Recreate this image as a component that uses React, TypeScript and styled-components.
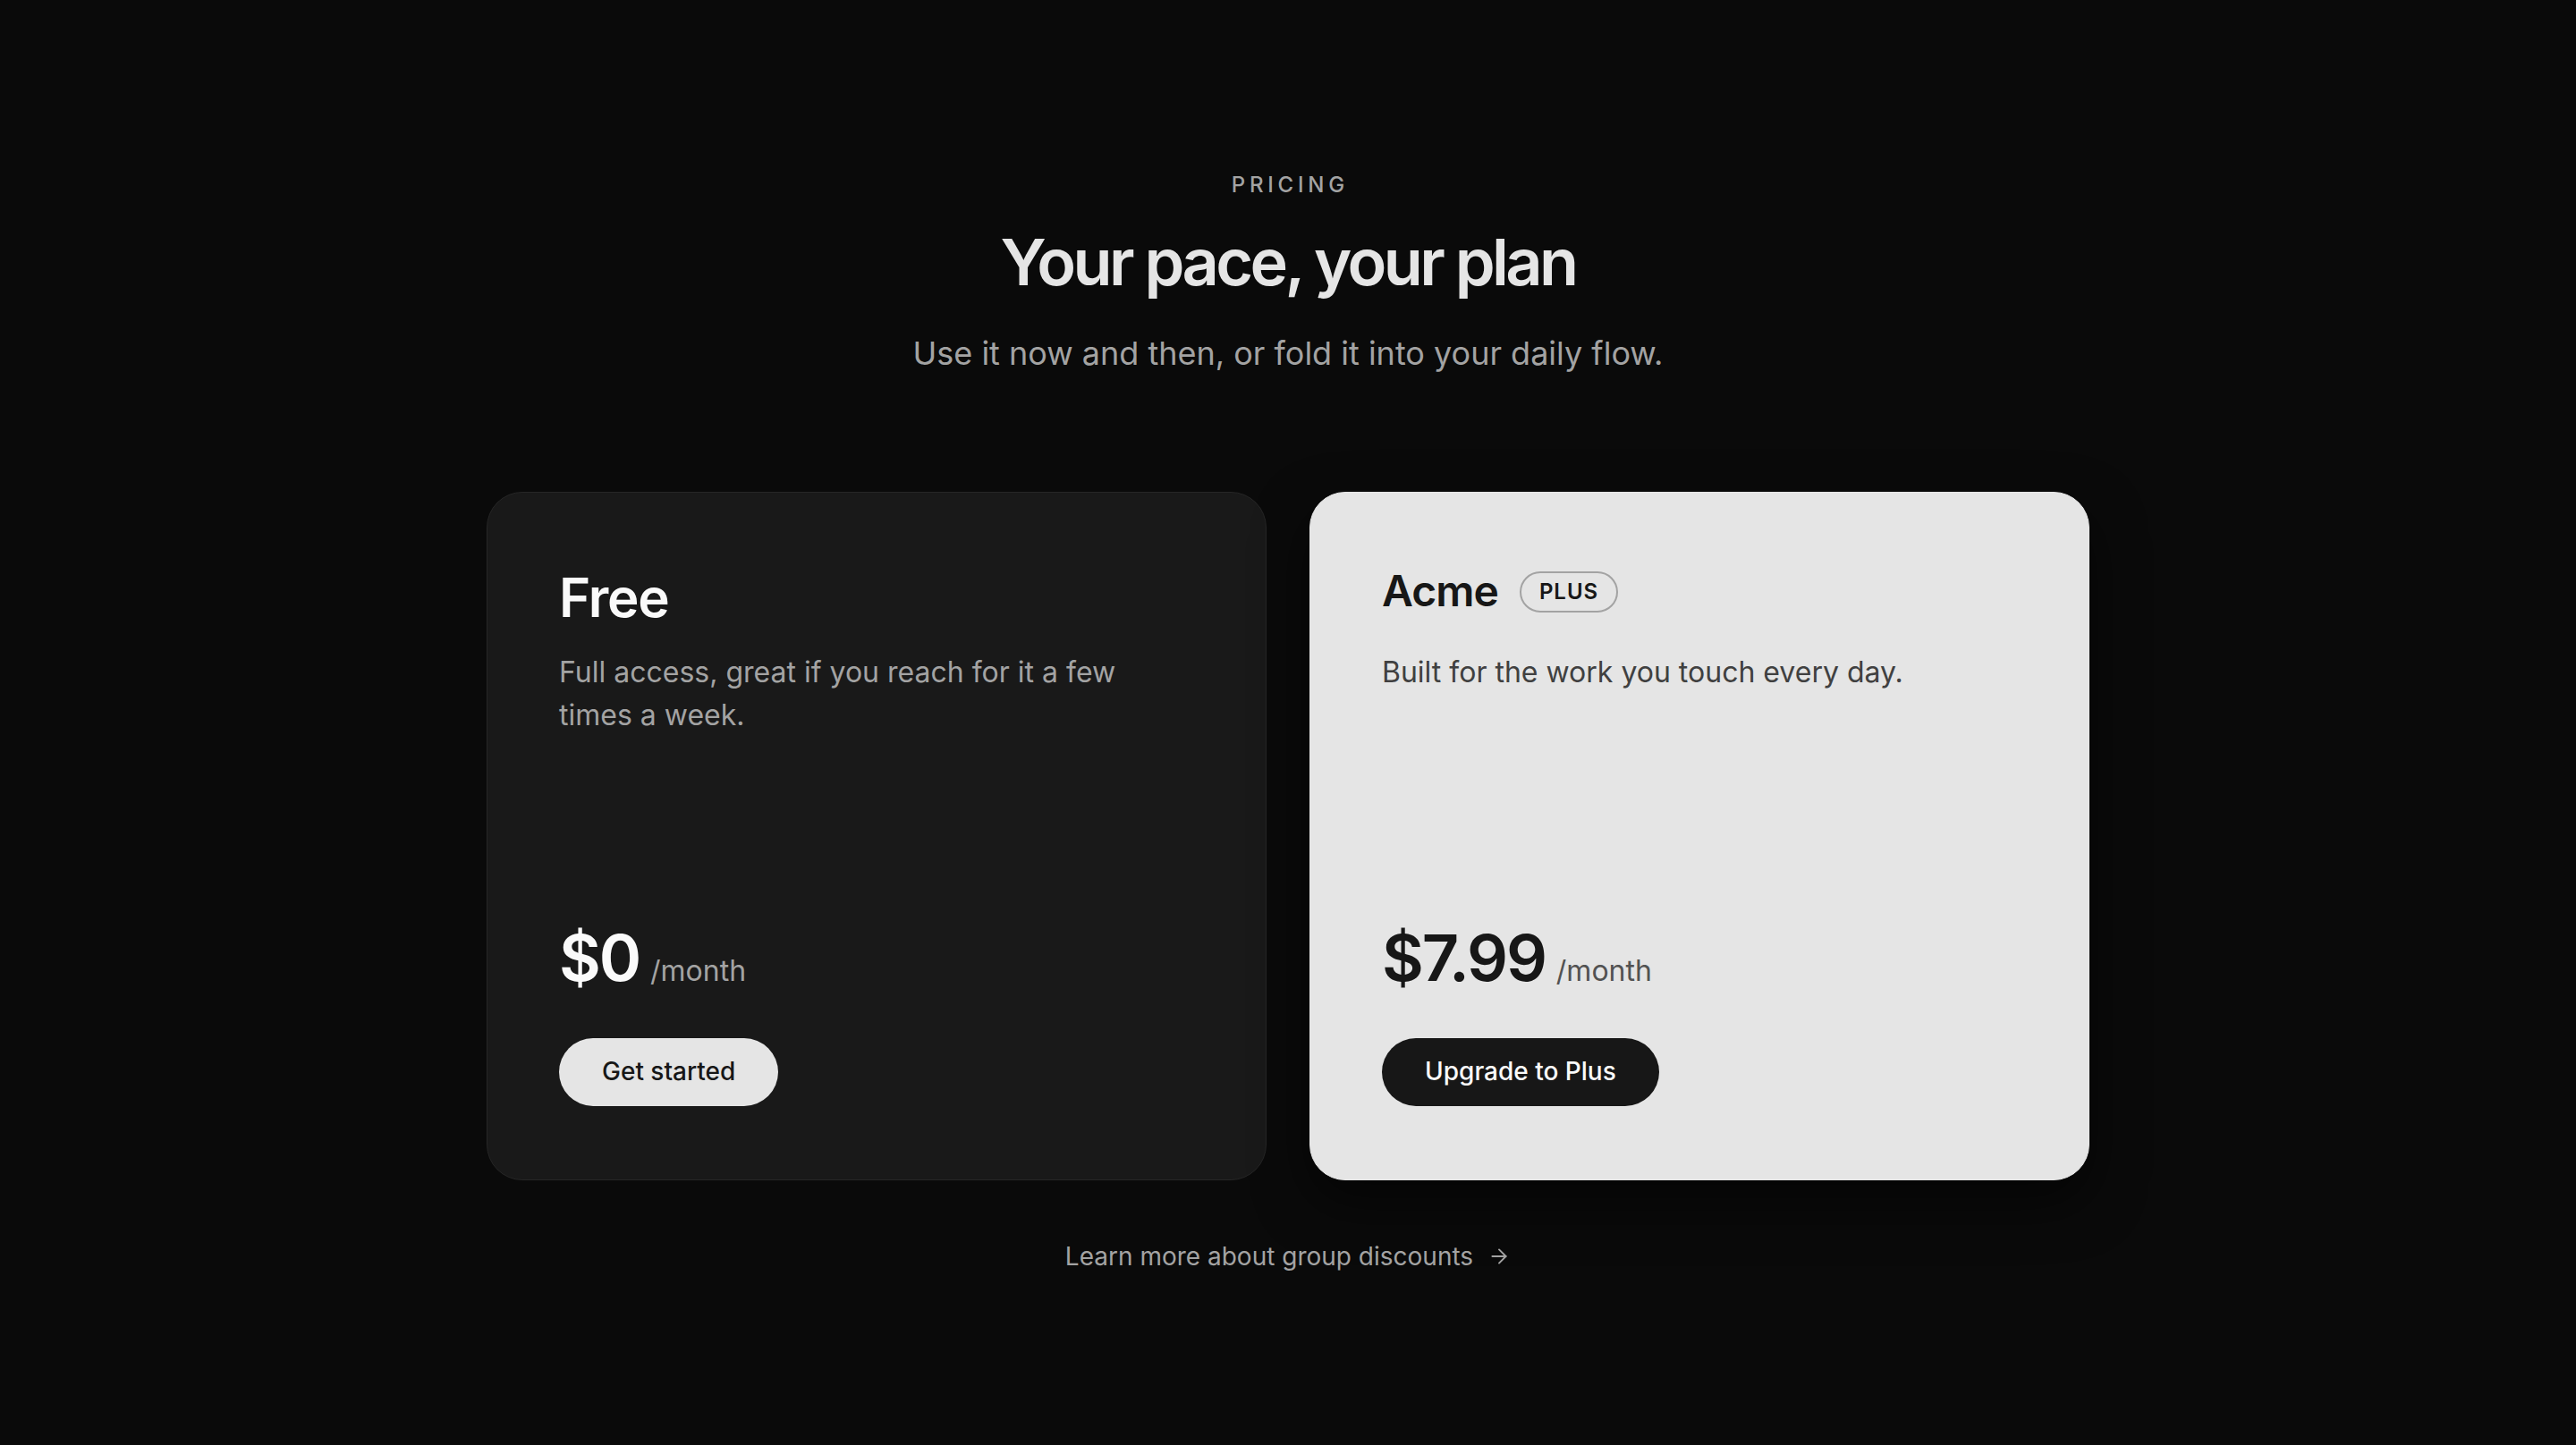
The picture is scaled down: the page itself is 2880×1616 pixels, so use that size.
import styled, { createGlobalStyle } from "styled-components"
import { ArrowRight } from "lucide-react"

const GlobalStyle = createGlobalStyle`
    html, body {
        margin: 0;
        padding: 0;
        background: #0a0a0a;
    }
    body {
        font-family: Inter, "Noto Sans", "Liberation Sans", sans-serif;
        -webkit-font-smoothing: antialiased;
    }
    * { box-sizing: border-box; }
`

type Tone = 'dark' | 'light'

const Page = styled.main({
    minHeight: '100vh',
    display: 'flex',
    flexDirection: 'column',
    alignItems: 'center',
    justifyContent: 'center',
    padding: '44px 0 40px',
})

const Eyebrow = styled.div({
    fontSize: 24,
    lineHeight: '33px',
    fontWeight: 500,
    letterSpacing: '0.2em',
    color: '#a3a3a3',
    textTransform: 'uppercase',
    paddingLeft: '0.2em',
    marginTop: -4,
})

const Title = styled.h1({
    margin: '30px 0 0',
    fontSize: 72,
    lineHeight: 1.1,
    fontWeight: 600,
    letterSpacing: '-0.05em',
    color: '#e5e5e5',
})

const Subtitle = styled.p({
    margin: '35px 0 0',
    fontSize: 36,
    lineHeight: 1.5,
    color: '#a3a3a3',
})

const Plans = styled.div({
    marginTop: 128,
    width: 1792,
    display: 'grid',
    gridTemplateColumns: '1fr 1fr',
    gap: 48,
})

const Card = styled.section((props: { tone: Tone }) => ({
    minHeight: 770,
    display: 'flex',
    flexDirection: 'column',
    alignItems: 'flex-start',
    padding: '81px 80px 82px',
    borderRadius: 40,
    background: props.tone === 'dark' ? '#191919' : '#e5e5e5',
    border: props.tone === 'dark' ? '1px solid #262626' : '1px solid #e5e5e5',
    boxShadow: props.tone === 'light' ? '0 24px 60px rgba(0, 0, 0, 0.55)' : 'none',
}))

const CardHeader = styled.div({
    minHeight: 72,
})

const NameRow = styled.div({
    display: 'flex',
    alignItems: 'center',
    gap: 24,
})

const PlanName = styled.h2((props: { tone: Tone, size: number }) => ({
    margin: 0,
    fontSize: props.size,
    lineHeight: 1.2,
    fontWeight: 600,
    letterSpacing: '-0.02em',
    color: props.tone === 'dark' ? '#fafafa' : '#171717',
}))

const Badge = styled.span({
    display: 'inline-block',
    marginTop: 4,
    padding: '9px 20px',
    border: '2px solid #a3a3a3',
    borderRadius: 999,
    fontSize: 24,
    lineHeight: 1,
    fontWeight: 600,
    letterSpacing: '0.04em',
    textTransform: 'uppercase',
    color: '#171717',
})

const Description = styled.p((props: { tone: Tone }) => ({
    margin: '24px 0 0',
    maxWidth: 660,
    fontSize: 32,
    lineHeight: 1.5,
    color: props.tone === 'dark' ? '#a3a3a3' : '#404040',
}))

const PriceRow = styled.div({
    marginTop: 'auto',
    display: 'flex',
    alignItems: 'baseline',
    gap: 12,
})

const Amount = styled.span((props: { tone: Tone }) => ({
    fontSize: 72,
    lineHeight: 1,
    fontWeight: 600,
    letterSpacing: '-0.03em',
    color: props.tone === 'dark' ? '#fafafa' : '#171717',
}))

const Period = styled.span((props: { tone: Tone }) => ({
    fontSize: 32,
    color: props.tone === 'dark' ? '#a3a3a3' : '#525252',
}))

const Button = styled.button((props: { tone: Tone }) => ({
    marginTop: 54,
    border: 0,
    padding: '18px 48px',
    borderRadius: 999,
    fontFamily: 'inherit',
    fontSize: 28,
    lineHeight: 1.4,
    fontWeight: 500,
    cursor: 'pointer',
    background: props.tone === 'dark' ? '#e5e5e5' : '#171717',
    color: props.tone === 'dark' ? '#171717' : '#fafafa',
}))

const MoreLink = styled.a({
    marginTop: 64,
    display: 'inline-flex',
    alignItems: 'center',
    gap: 16,
    fontSize: 28,
    lineHeight: 1.5,
    color: '#a3a3a3',
    textDecoration: 'none',
})

function App(): JSX.Element {
    return (
        <>
            <GlobalStyle />
            <Page>
                <Eyebrow>Pricing</Eyebrow>
                <Title>Your pace, your plan</Title>
                <Subtitle>Use it now and then, or fold it into your daily flow.</Subtitle>

                <Plans>
                    <Card tone="dark">
                        <CardHeader>
                            <PlanName tone="dark" size={60}>Free</PlanName>
                        </CardHeader>
                        <Description tone="dark">
                            Full access, great if you reach for it a few times a week.
                        </Description>
                        <PriceRow>
                            <Amount tone="dark">$0</Amount>
                            <Period tone="dark">/month</Period>
                        </PriceRow>
                        <Button tone="dark">Get started</Button>
                    </Card>

                    <Card tone="light">
                        <CardHeader>
                            <NameRow>
                                <PlanName tone="light" size={48}>Acme</PlanName>
                                <Badge>Plus</Badge>
                            </NameRow>
                        </CardHeader>
                        <Description tone="light">
                            Built for the work you touch every day.
                        </Description>
                        <PriceRow>
                            <Amount tone="light">$7.99</Amount>
                            <Period tone="light">/month</Period>
                        </PriceRow>
                        <Button tone="light">Upgrade to Plus</Button>
                    </Card>
                </Plans>

                <MoreLink href="#">
                    Learn more about group discounts
                    <ArrowRight size={26} strokeWidth={1.75} />
                </MoreLink>
            </Page>
        </>
    )
}

export default App
